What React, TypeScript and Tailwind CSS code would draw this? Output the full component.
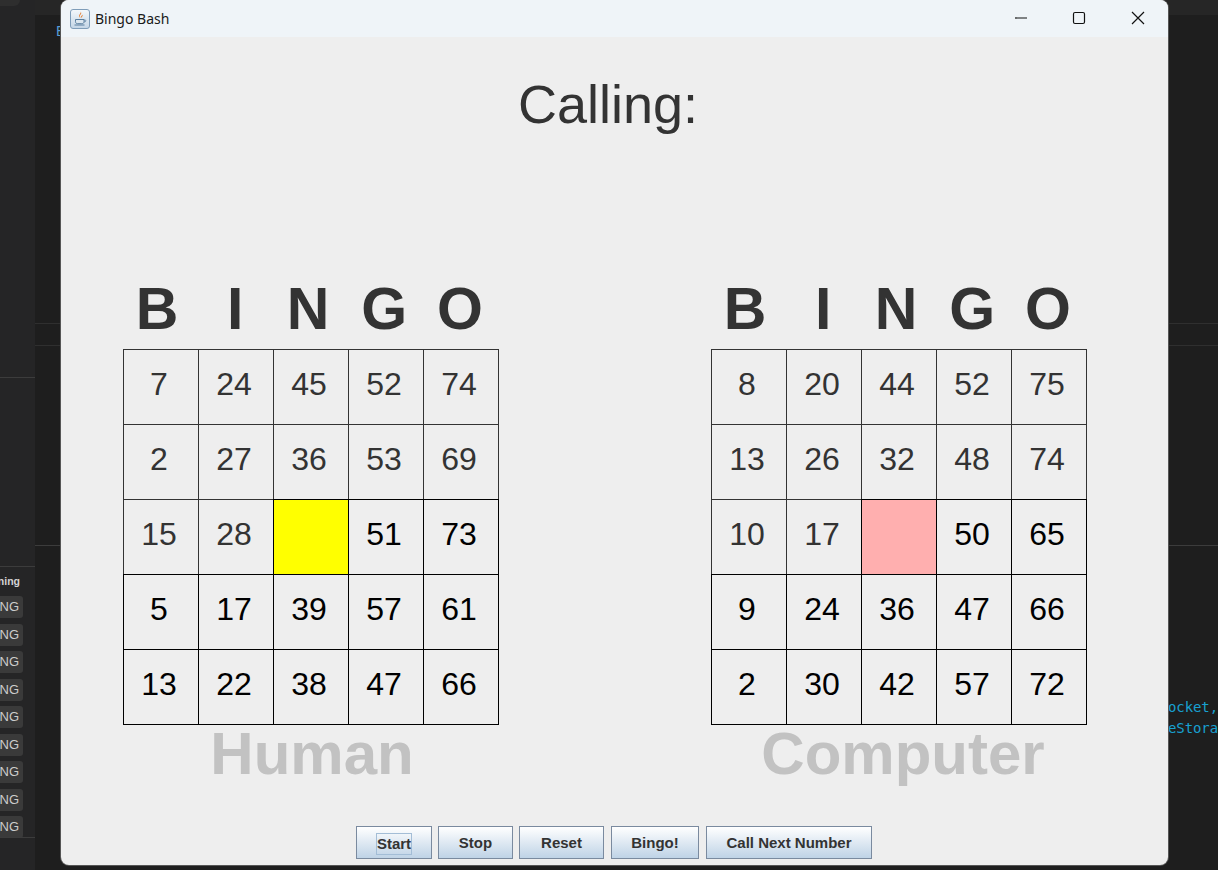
const HUMAN = [
  [7, 24, 45, 52, 74],
  [2, 27, 36, 53, 69],
  [15, 28, 0, 51, 73],
  [5, 17, 39, 57, 61],
  [13, 22, 38, 47, 66],
]

const COMPUTER = [
  [8, 20, 44, 52, 75],
  [13, 26, 32, 48, 74],
  [10, 17, 0, 50, 65],
  [9, 24, 36, 47, 66],
  [2, 30, 42, 57, 72],
]

const HEADERS = [
  { letter: 'B', cls: 'pr-[7px]' },
  { letter: 'I', cls: 'pr-[1px]' },
  { letter: 'N', cls: 'pr-[6px]' },
  { letter: 'G', cls: 'pr-[4px]' },
  { letter: 'O', cls: 'pr-[3px]' },
]

const BUTTONS = [
  { label: 'Start', cls: 'w-[76px] mr-[6px]', focused: true },
  { label: 'Stop', cls: 'w-[75px] mr-[6px]' },
  { label: 'Reset', cls: 'w-[85px] mr-[7px]' },
  { label: 'Bingo!', cls: 'w-[88px] mr-[7px]' },
  { label: 'Call Next Number', cls: 'w-[166px]' },
]

function JavaIcon() {
  return (
    <svg width="20" height="20" viewBox="0 0 20 20" className="shrink-0">
      <defs>
        <linearGradient id="tile" x1="0" y1="0" x2="0" y2="1">
          <stop offset="0" stopColor="#f4f8fb" />
          <stop offset="1" stopColor="#c3d5e6" />
        </linearGradient>
      </defs>
      <rect x="0.5" y="0.5" width="19" height="19" rx="2.5" fill="url(#tile)" stroke="#7f9db9" />
      <path d="M10.500 2.500c1.200 1.800-2 2.800-1.200 5 .3.800.8 1.200 1 1.800.3-1.200-.9-1.700-.3-3 .5-1 2.300-1.800.5-3.800z" fill="#e8741e" />
      <path d="M12.500 5.500c-.4 1-1.500 1.500-1.400 2.500 0 .4.200.7.400 1-.1-.9 1.700-1.700 1-3.500z" fill="#e8741e" />
      <path d="M5.500 10.500h8.500v2.200c0 1.300-1 2-2.200 2H7.700c-1.200 0-2.200-.7-2.200-2z" fill="#dbe6ef" stroke="#5a7f9f" strokeWidth="1" />
      <path d="M14 11h1.200c.9 0 .9 1.800-.4 1.800H14" fill="none" stroke="#5a7f9f" strokeWidth=".8" />
      <path d="M4.500 16h10" stroke="#5a7f9f" strokeWidth="1" />
    </svg>
  )
}

function Board({ rows, freeCls, label, labelCls }: { rows: number[][]; freeCls: string; label: string; labelCls: string }) {
  return (
    <div className="w-[376px]">
      <div className="grid grid-cols-5 h-[69px] pb-[12px] items-center text-[59px] font-bold leading-none text-[#333333]">
        {HEADERS.map(h => (
          <div key={h.letter} className={`text-center ${h.cls}`}>{h.letter}</div>
        ))}
      </div>
      {/* cells are 76px on a 75px track so neighbours share a border, the later cell's colour wins */}
      <div className="grid grid-cols-[repeat(5,75px)] auto-rows-[75px] h-[376px]">
        {rows.map((row, r) =>
          row.map((n, c) => {
            const dimmed = r < 2 || (r === 2 && c < 2)
            return (
              <div
                key={`${r}-${c}`}
                className={`w-[76px] h-[76px] border flex items-center justify-center pr-[4px] pb-[6px] text-[32px] ${n === 0 ? freeCls : ''} ${dimmed ? 'text-[#333333] border-[#333333]' : 'text-black border-black'}`}
              >
                {n === 0 ? '' : n}
              </div>
            )
          })
        )}
      </div>
      <div className={`mt-[-1px] h-[60px] flex items-center justify-center text-[60px] font-bold leading-none text-[#c2c2c2] whitespace-nowrap ${labelCls}`}>
        {label}
      </div>
    </div>
  )
}

export default function App() {
  return (
    <div className="relative flex w-[1218px] h-[870px] overflow-hidden bg-[#1e1e1e] font-['Liberation_Sans',Arial,sans-serif]">

      {/* sidebar behind the window */}
      <div className="w-[35px] shrink-0 h-full bg-[#252526] flex flex-col">
        <div className="w-[20px] h-[6px] bg-[#2e2e2e] rounded-br-md" />
        <div className="h-[372px] shrink-0 border-b border-[#3c3c3c]" />
        <div className="h-[189px] shrink-0 border-b border-[#3c3c3c]" />
        <div className="h-[271px] shrink-0 border-b border-[#3c3c3c] overflow-hidden pt-[7px]">
          <div className="w-[20px] flex justify-end text-[10.500px] leading-[14px] font-bold text-[#d4d4d4]">ning</div>
          <div className="mt-[8px] flex flex-col gap-[5.500px]">
            {Array.from({ length: 9 }).map((_, i) => (
              <div key={i} className="w-[23px] h-[22px] bg-[#3a3a3a] rounded-r-[3px] flex items-center justify-end pr-[4px] text-[13px] text-[#cccccc]">
                NG
              </div>
            ))}
          </div>
        </div>
      </div>

      {/* editor behind the window */}
      <div className="relative flex-1 min-w-0 flex flex-col">
        <div className="h-[15px] shrink-0 bg-[#262626]" />
        <div className="pl-[21px] pt-[7px] h-[309px] shrink-0 border-b border-[#2f2f2f] text-[14px] leading-[18px] text-[#569cd6]">E</div>
        <div className="h-[22px] shrink-0 border-b border-[#2f2f2f]" />
        <div className="h-[200px] shrink-0 border-b border-[#3c3c3c]" />
        <div className="pt-[151px] pl-[1133px] text-[14px] tracking-[-0.1px] leading-[21px] whitespace-nowrap text-[#18a0d0] font-['DejaVu_Sans_Mono',monospace]">
          <div>ocket,</div>
          <div>eStora</div>
        </div>
      </div>

      {/* Bingo Bash window */}
      <div className="absolute left-[61px] top-0 w-[1107px] h-[865px] rounded-lg overflow-hidden bg-[#eeeeee] flex flex-col shadow-[0_0_0_1px_#555555]">
        <div className="h-[37px] shrink-0 bg-[#eff4f8] flex items-center pl-[9px]">
          <JavaIcon />
          <span className="ml-[5px] text-[14px] text-[#1a1a1a] font-['Noto_Sans',sans-serif]">Bingo Bash</span>
          <div className="ml-auto flex items-center pb-[2px]">
            <div className="w-[58px] flex justify-center">
              <svg width="14" height="14" viewBox="0 0 14 14"><path d="M1 7h12" stroke="#111" strokeWidth="1.200" /></svg>
            </div>
            <div className="w-[58px] flex justify-center">
              <svg width="14" height="14" viewBox="0 0 14 14"><rect x="1.500" y="1.500" width="11" height="11" rx="1.500" fill="none" stroke="#111" strokeWidth="1.200" /></svg>
            </div>
            <div className="w-[60px] flex justify-center">
              <svg width="14" height="14" viewBox="0 0 14 14"><path d="M1 1l12 12M13 1L1 13" stroke="#111" strokeWidth="1.200" /></svg>
            </div>
          </div>
        </div>

        <div className="flex-1 min-h-0 flex flex-col">
          <div className="h-[243px] shrink-0 pt-[36px] pr-[13px] text-center text-[54px] leading-[62px] text-[#333333]">Calling:</div>

          <div className="flex gap-[212px] pl-[62px]">
            <Board rows={HUMAN} freeCls="bg-[#ffff00]" label="Human" labelCls="pl-[2px]" />
            <Board rows={COMPUTER} freeCls="bg-[#ffafaf]" label="Computer" labelCls="pl-[8px]" />
          </div>

          <div className="mt-auto mb-[6px] flex pl-[295px]">
            {BUTTONS.map(b => (
              <button
                key={b.label}
                className={`h-[33px] ${b.cls} flex items-center justify-center border border-[#7a8a9f] bg-gradient-to-b from-[#ffffff] to-[#bfd3e6] text-[15px] font-bold text-[#333333] pt-[2px]`}
              >
                {b.focused ? (
                  <span className="border border-[#a3bdd6] leading-[20px]">{b.label}</span>
                ) : b.label}
              </button>
            ))}
          </div>
        </div>
      </div>
    </div>
  )
}
